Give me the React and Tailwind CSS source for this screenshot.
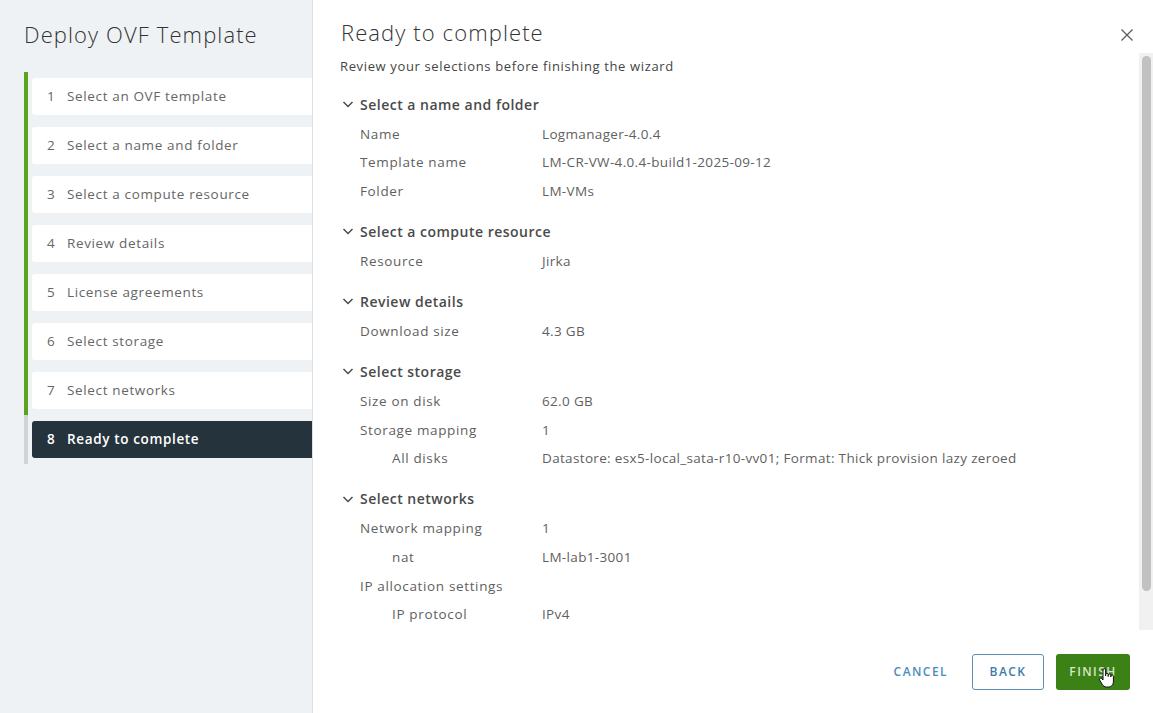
import React from "react";

const steps = [
  "Select an OVF template",
  "Select a name and folder",
  "Select a compute resource",
  "Review details",
  "License agreements",
  "Select storage",
  "Select networks",
  "Ready to complete",
];

const sections = [
  {
    title: "Select a name and folder",
    rows: [
      { label: "Name", value: "Logmanager-4.0.4" },
      { label: "Template name", value: "LM-CR-VW-4.0.4-build1-2025-09-12" },
      { label: "Folder", value: "LM-VMs" },
    ],
  },
  {
    title: "Select a compute resource",
    rows: [{ label: "Resource", value: "Jirka" }],
  },
  {
    title: "Review details",
    rows: [{ label: "Download size", value: "4.3 GB" }],
  },
  {
    title: "Select storage",
    rows: [
      { label: "Size on disk", value: "62.0 GB" },
      { label: "Storage mapping", value: "1" },
      {
        label: "All disks",
        value: "Datastore: esx5-local_sata-r10-vv01; Format: Thick provision lazy zeroed",
        indent: true,
      },
    ],
  },
  {
    title: "Select networks",
    rows: [
      { label: "Network mapping", value: "1" },
      { label: "nat", value: "LM-lab1-3001", indent: true },
      { label: "IP allocation settings", value: "" },
      { label: "IP protocol", value: "IPv4", indent: true },
    ],
  },
];

const Chevron = () => (
  <svg width="12" height="12" viewBox="0 0 12 12" className="mr-[6px]">
    <path d="M1.5 4 L6 8.5 L10.5 4" fill="none" stroke="#4a4a4a" strokeWidth="1.5" />
  </svg>
);

const App = () => {
  return (
    <div
      className="flex h-[713px] w-[1153px] overflow-hidden bg-white text-[#565656] tracking-[0.04em]"
      style={{ fontFamily: '"Open Sans", "Noto Sans", sans-serif' }}
    >
      {/* Left: steps */}
      <div className="w-[313px] shrink-0 bg-[#eff2f5] border-r border-[#dde1e4]">
        <h1 className="pl-[24px] pt-[19px] h-[72px] text-[22px] leading-[30px] font-light tracking-[0.05em] text-[#333]">
          Deploy OVF Template
        </h1>
        <div className="ml-[24px]">
          {steps.map((s, i) => {
            const active = i === steps.length - 1;
            return (
              <div
                key={i}
                className={
                  "border-l-4 pl-[4px] py-[6px] " +
                  (active ? "border-[#cfd3d6]" : "border-[#5aa220]")
                }
              >
                <div
                  className={
                    "flex items-center h-[37px] rounded-l-[3px] text-[13.5px] " +
                    (active ? "bg-[#25333d] text-white font-semibold" : "bg-white text-[#666]")
                  }
                >
                  <span className="w-[35px] pl-[15px]">{i + 1}</span>
                  <span>{s}</span>
                </div>
              </div>
            );
          })}
        </div>
      </div>

      {/* Right: summary */}
      <div className="flex-1 flex flex-col min-w-0">
        <div className="flex items-start h-[53px] pl-[28px] pr-[18px]">
          <h2 className="pt-[17px] text-[22px] leading-[30px] font-light tracking-[0.05em] text-[#333] flex-1">
            Ready to complete
          </h2>
          <button className="mt-[27px] w-[16px] h-[16px] flex items-center justify-center">
            <svg width="14" height="14" viewBox="0 0 14 14">
              <path d="M1.5 1.5 L12.5 12.5 M12.5 1.5 L1.5 12.5" stroke="#5c5c5c" strokeWidth="1.3" />
            </svg>
          </button>
        </div>

        <div className="flex h-[577px]">
          <div className="flex-1 overflow-hidden pl-[27px] pt-[5px]">
            <p className="text-[13px] leading-[16px] text-[#454545] mb-[15px]">
              Review your selections before finishing the wizard
            </p>
            {sections.map((sec) => (
              <div key={sec.title} className="mb-[11.5px]">
                <div className="flex items-center h-[30px] pl-[2px] text-[14px] font-semibold tracking-[0.035em] text-[#4a4a4a]">
                  <Chevron />
                  {sec.title}
                </div>
                {sec.rows.map((r) => (
                  <div key={r.label} className="flex items-center h-[28.6px] pt-[1px] text-[13.5px] text-[#5f5f5f]">
                    <span
                      className={
                        "w-[202px] shrink-0 " + (r.indent ? "pl-[52px]" : "pl-[20px]")
                      }
                    >
                      {r.label}
                    </span>
                    <span className="whitespace-nowrap tracking-[0.025em]">{r.value}</span>
                  </div>
                ))}
              </div>
            ))}
          </div>
          {/* scrollbar */}
          <div className="w-[14px] shrink-0 bg-[#f1f1f1] flex justify-center pt-[3px]">
            <div className="w-[9px] h-[535px] rounded-full bg-[#c1c1c1]" />
          </div>
        </div>

        <div className="flex-1 flex items-start justify-end pr-[23px] pt-[24px] gap-[12px]">
          <button className="h-[36px] px-[12px] text-[12px] font-semibold tracking-[0.12em] text-[#4a8cba]">
            CANCEL
          </button>
          <button className="h-[36px] w-[72px] rounded-[3px] border border-[#5a91b8] bg-white text-[12px] font-semibold tracking-[0.12em] text-[#3b7cab]">
            BACK
          </button>
          <button className="relative h-[36px] w-[74px] rounded-[3px] bg-[#3b8115] text-[12px] font-semibold tracking-[0.12em] text-[#d7e6cc]">
            FINISH
            <svg
              width="18"
              height="22"
              viewBox="0 0 18 22"
              className="absolute left-[42px] top-[13px]"
            >
              <path
                d="M5 10 V3 a1.3 1.3 0 0 1 2.6 0 V9 V7.6 a1.3 1.3 0 0 1 2.6 0 V9.5 V8.4 a1.3 1.3 0 0 1 2.6 0 V10 V9.2 a1.3 1.3 0 0 1 2.6 0 V15 c0 3 -2 5 -5 5 h-2 c-2 0 -3 -1 -4 -2.5 L1.6 13 a1.3 1.3 0 0 1 2 -1.6 L5 13 Z"
                fill="#fff"
                stroke="#111"
                strokeWidth="1"
                strokeLinejoin="round"
              />
            </svg>
          </button>
        </div>
      </div>
    </div>
  );
};

export default App;
